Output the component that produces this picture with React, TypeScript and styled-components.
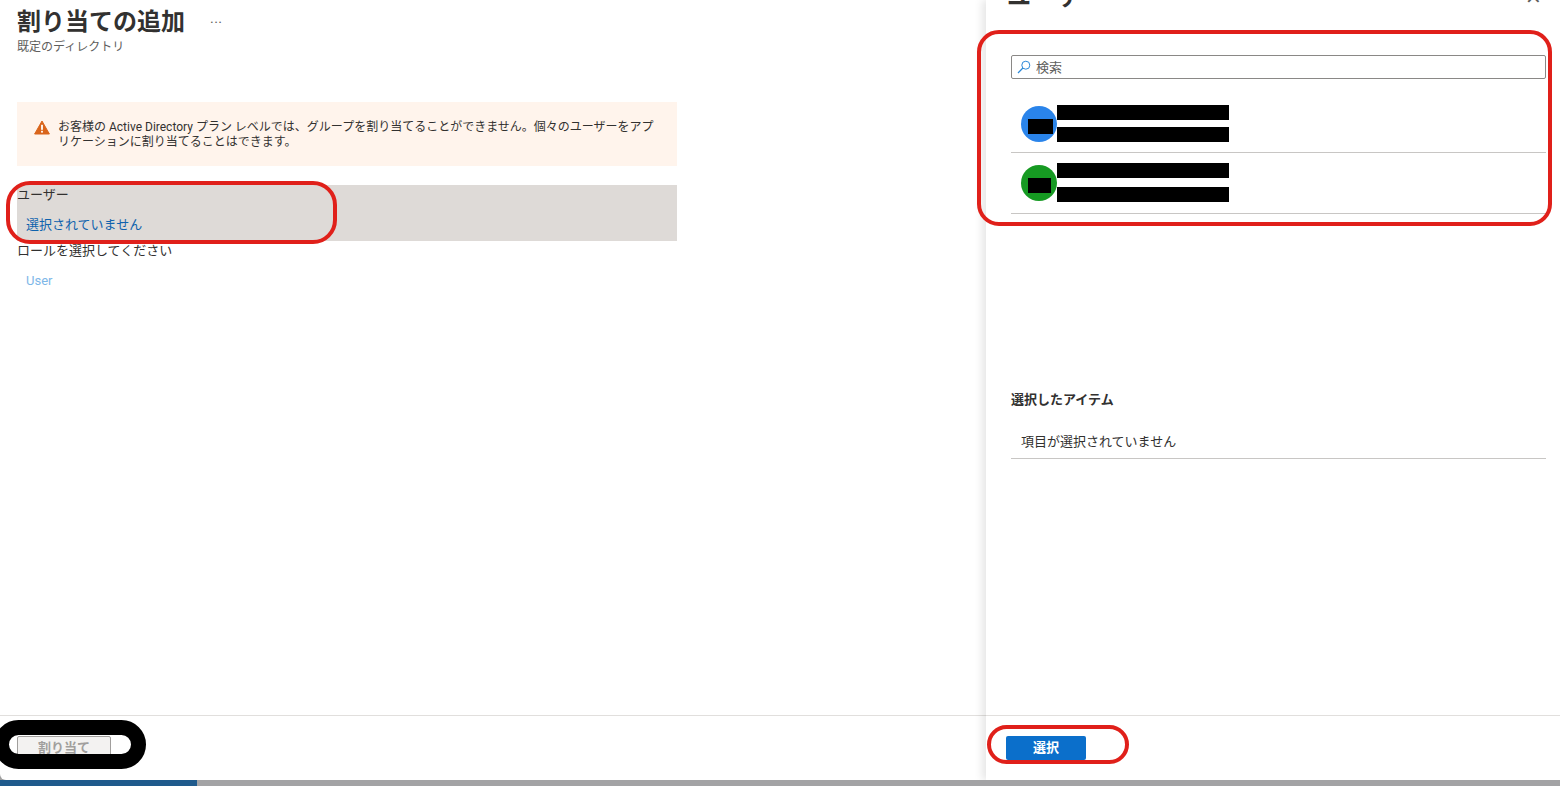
import { FC } from 'react';
import styled, { createGlobalStyle } from 'styled-components';

const GlobalStyle = createGlobalStyle`
  html, body {
    margin: 0;
    padding: 0;
    background: #fff;
  }
  * {
    box-sizing: border-box;
  }
`;

const Page = styled.div`
  position: relative;
  width: 1560px;
  height: 786px;
  overflow: hidden;
  display: flex;
  flex-direction: column;
  background: #9f9f9f;
  color: #323130;
  font-family: 'Roboto', 'Noto Sans CJK JP', sans-serif;
  font-size: 12px;
`;

const Blades = styled.div`
  flex: 1;
  min-height: 0;
  display: flex;
  background: #fff;
  border-bottom-left-radius: 6px;
  overflow: hidden;
`;

const AssignBlade = styled.section`
  width: 986px;
  display: flex;
  flex-direction: column;
`;

const BladeBody = styled.div`
  flex: 1;
  padding: 7px 0 0 17px;
`;

const TitleRow = styled.div`
  display: flex;
  align-items: center;
  height: 30px;
  gap: 25px;
`;

const Title = styled.h1`
  margin: 0;
  font-size: 24px;
  line-height: 30px;
  font-weight: 700;
  color: #323130;
`;

const More = styled.span`
  margin-top: 2px;
  font-size: 14px;
  color: #605e5c;
  letter-spacing: 0.5px;
`;

const Subtitle = styled.div`
  margin-top: 2px;
  font-size: 12px;
  line-height: 16px;
  color: #605e5c;
`;

const Notice = styled.div`
  width: 660px;
  height: 64px;
  margin-top: 47px;
  padding: 18px 17px 0;
  display: flex;
  align-items: flex-start;
  gap: 8px;
  background: #fff4ec;
`;

const NoticeText = styled.p`
  margin: 0;
  font-size: 12px;
  line-height: 15px;
  color: #323130;
`;

const UserField = styled.div`
  width: 660px;
  height: 56px;
  margin-top: 19px;
  background: #dedad7;
`;

const FieldLabel = styled.div`
  padding-top: 1px;
  font-size: 13px;
  line-height: 18px;
  color: #323130;
`;

const FieldLink = styled.a<{ $muted?: boolean }>`
  display: block;
  margin-top: 12px;
  padding-left: 9px;
  font-size: 13px;
  line-height: 18px;
  color: ${({ $muted }) => ($muted ? '#7db7e8' : '#0f62ad')};
`;

const RoleField = styled.div`
  margin-top: 0;
`;

const BladeFooter = styled.footer<{ $left: number }>`
  height: 65px;
  padding: 20px 0 0 ${({ $left }) => $left}px;
  border-top: 1px solid #e1dfdd;
`;

const DisabledButton = styled.button`
  width: 94px;
  height: 24px;
  padding: 0 0 4px;
  border: 1px solid #a19f9d;
  border-radius: 2px;
  background: #f3f2f1;
  color: #a19f9d;
  font-family: inherit;
  font-size: 13px;
  font-weight: 700;
`;

const PrimaryButton = styled.button`
  width: 80px;
  height: 24px;
  padding: 0 0 4px;
  border: none;
  border-radius: 2px;
  background: #0b6fcb;
  color: #fff;
  font-family: inherit;
  font-size: 13px;
  font-weight: 700;
`;

const PickerBlade = styled.section`
  flex: 1;
  display: flex;
  flex-direction: column;
  background: #fff;
  box-shadow: -4px 0 8px rgba(0, 0, 0, 0.1);
  z-index: 1;
`;

const PickerBody = styled.div`
  flex: 1;
  padding: 0 14px 0 25px;
`;

const PickerHeader = styled.div`
  display: flex;
  justify-content: space-between;
  align-items: center;
  height: 55px;
  margin-left: -4px;
  padding-right: 4px;
  overflow: hidden;
`;

const PickerTitle = styled.h2`
  margin: -62px 0 0;
  font-size: 24px;
  line-height: 30px;
  font-weight: 700;
`;

const CloseGlyph = styled.span`
  margin-top: -62px;
  font-size: 20px;
  line-height: 30px;
  color: #605e5c;
`;

const SearchBox = styled.label`
  display: flex;
  align-items: center;
  gap: 5px;
  height: 24px;
  padding-left: 5px;
  border: 1px solid #8a8886;
  border-radius: 2px;
`;

const SearchInput = styled.input`
  flex: 1;
  min-width: 0;
  border: none;
  outline: none;
  padding: 0;
  background: transparent;
  font-family: inherit;
  font-size: 13px;
  &::placeholder {
    color: #605e5c;
    opacity: 1;
  }
`;

const UserList = styled.div`
  margin-top: 15px;
`;

const UserRow = styled.div<{ $height: number }>`
  position: relative;
  display: flex;
  align-items: flex-start;
  height: ${({ $height }) => $height}px;
  padding-left: 10px;
  border-bottom: 1px solid #c8c6c4;
`;

const Avatar = styled.div<{ $color: string; $top: number }>`
  position: relative;
  width: 36px;
  height: 36px;
  margin-top: ${({ $top }) => $top}px;
  border-radius: 50%;
  background: ${({ $color }) => $color};
  flex-shrink: 0;
`;

const AvatarMask = styled.div<{ $width: number }>`
  position: absolute;
  left: 7px;
  top: 13px;
  width: ${({ $width }) => $width}px;
  height: 15px;
  background: #000;
`;

const Masks = styled.div<{ $top: number; $gap: number }>`
  display: flex;
  flex-direction: column;
  gap: ${({ $gap }) => $gap}px;
  margin-top: ${({ $top }) => $top}px;
`;

const Mask = styled.div`
  width: 172px;
  height: 15px;
  background: #000;
`;

const SelectedHeading = styled.h3`
  margin: 177px 0 0;
  font-size: 13px;
  line-height: 18px;
  font-weight: 700;
  color: #323130;
`;

const EmptyRow = styled.div`
  height: 37px;
  margin-top: 13px;
  padding: 11px 0 0 10px;
  border-bottom: 1px solid #c8c6c4;
  font-size: 13px;
  line-height: 18px;
`;

const ProgressTrack = styled.div`
  height: 6px;
  flex-shrink: 0;
  background: #a3a3a5;
`;

const ProgressFill = styled.div`
  width: 197px;
  height: 100%;
  background: #1f5a8c;
`;

const Callout = styled.div`
  position: absolute;
  z-index: 2;
  pointer-events: none;
  border: 4px solid #e0201a;
`;

const UserCallout = styled(Callout)`
  left: 6px;
  top: 181px;
  width: 331px;
  height: 63px;
  border-radius: 24px;
`;

const ListCallout = styled(Callout)`
  left: 977px;
  top: 30px;
  width: 575px;
  height: 196px;
  border-radius: 22px;
`;

const SelectCallout = styled(Callout)`
  left: 987px;
  top: 725px;
  width: 142px;
  height: 39px;
  border-radius: 20px;
`;

const RedactedCallout = styled(Callout)`
  left: -6px;
  top: 720px;
  width: 152px;
  height: 49px;
  border: 15px solid #000;
  border-radius: 25px;
`;

const WarningIcon: FC = () => (
  <svg width="16" height="15" viewBox="0 0 16 15" style={{ flexShrink: 0 }}>
    <path d="M8 1 L15.4 14 H0.6 Z" fill="#d9651c" stroke="#d9651c" strokeLinejoin="round" />
    <rect x="7.1" y="4.8" width="1.8" height="5" fill="#fff" />
    <rect x="7.1" y="10.8" width="1.8" height="1.8" fill="#fff" />
  </svg>
);

const SearchIcon: FC = () => (
  <svg width="14" height="14" viewBox="0 0 14 14" fill="none" stroke="#2b88d8" style={{ flexShrink: 0 }}>
    <circle cx="8.8" cy="5.2" r="4" strokeWidth="1" />
    <path d="M5.9 8 L1 13" strokeWidth="1.2" />
  </svg>
);

const App: FC = () => (
  <Page>
    <GlobalStyle />
    <Blades>
      <AssignBlade>
        <BladeBody>
          <TitleRow>
            <Title>割り当ての追加</Title>
            <More>···</More>
          </TitleRow>
          <Subtitle>既定のディレクトリ</Subtitle>
          <Notice>
            <WarningIcon />
            <NoticeText>
              お客様の Active Directory プラン レベルでは、グループを割り当てることができません。個々のユーザーをアプリケーションに割り当てることはできます。
            </NoticeText>
          </Notice>
          <UserField>
            <FieldLabel>ユーザー</FieldLabel>
            <FieldLink>選択されていません</FieldLink>
          </UserField>
          <RoleField>
            <FieldLabel>ロールを選択してください</FieldLabel>
            <FieldLink $muted>User</FieldLink>
          </RoleField>
        </BladeBody>
        <BladeFooter $left={17}>
          <DisabledButton disabled>割り当て</DisabledButton>
        </BladeFooter>
      </AssignBlade>
      <PickerBlade>
        <PickerBody>
          <PickerHeader>
            <PickerTitle>ユーザー</PickerTitle>
            <CloseGlyph>✕</CloseGlyph>
          </PickerHeader>
          <SearchBox>
            <SearchIcon />
            <SearchInput placeholder="検索" />
          </SearchBox>
          <UserList>
            <UserRow $height={59}>
              <Avatar $color="#2a84ea" $top={12}>
                <AvatarMask $width={25} />
              </Avatar>
              <Masks $top={11} $gap={7}>
                <Mask />
                <Mask />
              </Masks>
            </UserRow>
            <UserRow $height={61}>
              <Avatar $color="#169a22" $top={12}>
                <AvatarMask $width={23} />
              </Avatar>
              <Masks $top={10} $gap={9}>
                <Mask />
                <Mask />
              </Masks>
            </UserRow>
          </UserList>
          <SelectedHeading>選択したアイテム</SelectedHeading>
          <EmptyRow>項目が選択されていません</EmptyRow>
        </PickerBody>
        <BladeFooter $left={20}>
          <PrimaryButton>選択</PrimaryButton>
        </BladeFooter>
      </PickerBlade>
    </Blades>
    <ProgressTrack>
      <ProgressFill />
    </ProgressTrack>
    <UserCallout />
    <ListCallout />
    <SelectCallout />
    <RedactedCallout />
  </Page>
);

export default App;
